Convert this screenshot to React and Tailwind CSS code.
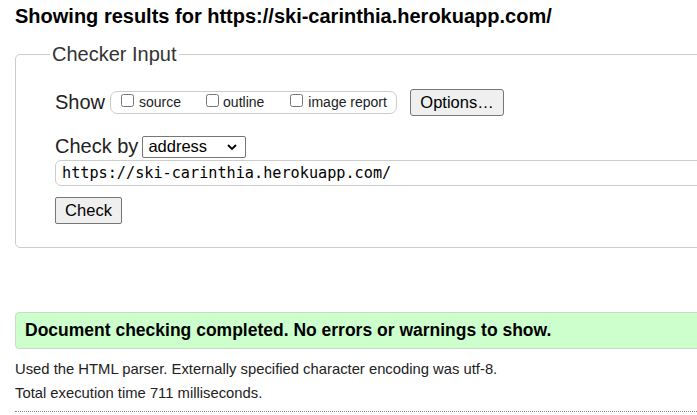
export default function App() {
  return (
    <div className="w-[697px] h-[415px] overflow-hidden bg-white font-['Liberation_Sans',Arial,sans-serif] text-[#222]">
      <div className="pl-[15px] w-[800px]">
        <h2 className="pt-[5px] text-[20px] leading-[23px] font-bold text-black">
          Showing results for https://ski-carinthia.herokuapp.com/
        </h2>

        <fieldset className="mt-[16px] w-[760px] border border-[#ccc] rounded-[5px] pl-[39px] pb-[23px]">
          <legend className="ml-[-5px] px-[2px] text-[20px] leading-[21px] text-[#333]">Checker Input</legend>

          <div className="mt-[24px] flex items-center h-[27px]">
            <span className="text-[20px] leading-[23px]">Show</span>
            <div className="ml-[5px] flex items-center h-[23px] w-[287px] border border-[#ccc] rounded-[7px] pl-[10px] text-[14px]">
              <label className="flex items-center">
                <input type="checkbox" className="w-[13px] h-[13px] m-0 mb-[4px]" />
                <span className="ml-[5px]">source</span>
              </label>
              <label className="flex items-center ml-[25px]">
                <input type="checkbox" className="w-[13px] h-[13px] m-0 mb-[4px]" />
                <span className="ml-[4px]">outline</span>
              </label>
              <label className="flex items-center ml-[26px]">
                <input type="checkbox" className="w-[13px] h-[13px] m-0 mb-[4px]" />
                <span className="ml-[5px]">image report</span>
              </label>
            </div>
            <button className="ml-[13px] h-[27px] w-[94px] bg-[#efefef] border border-[#767676] rounded-[3px] text-[16.5px] text-black">
              Options…
            </button>
          </div>

          <div className="mt-[19px] flex items-center">
            <span className="text-[20px] leading-[23px]">Check by</span>
            <div className="ml-[4px] relative w-[104px] h-[22px] border border-[#767676] rounded-[2px] flex items-center pl-[5px] text-[16.5px] text-black">
              address
              <svg className="absolute right-[8px] top-[6px]" width="10" height="8" viewBox="0 0 10 8">
                <path d="M1 2 L5 6 L9 2" fill="none" stroke="#000" strokeWidth="1.8" />
              </svg>
            </div>
          </div>

          <div className="mt-[2px] h-[26px] w-[700px] border border-[#ccc] rounded-[6px] flex items-center pl-[6px] font-['DejaVu_Sans_Mono',monospace] text-[15.2px] text-black">
            https://ski-carinthia.herokuapp.com/
          </div>

          <button className="mt-[11px] h-[27px] w-[67px] bg-[#efefef] border border-[#767676] rounded-[2px] text-[16.5px] text-black">
            Check
          </button>
        </fieldset>

        <div className="mt-[64px] h-[37px] w-[760px] bg-[#ccffcc] border border-[#c6dcc6] rounded-[4px] flex items-center pl-[9px] text-[17.5px] font-bold text-black">
          Document checking completed. No errors or warnings to show.
        </div>

        <p className="mt-[8px] text-[14.8px] leading-[24px] text-[#222]">
          Used the HTML parser. Externally specified character encoding was utf-8.
        </p>
        <p className="text-[14.8px] leading-[24px] text-[#222]">Total execution time 711 milliseconds.</p>
        <div className="mt-[6px] border-t border-dotted border-[#888] w-[760px]" />
      </div>
    </div>
  );
}
